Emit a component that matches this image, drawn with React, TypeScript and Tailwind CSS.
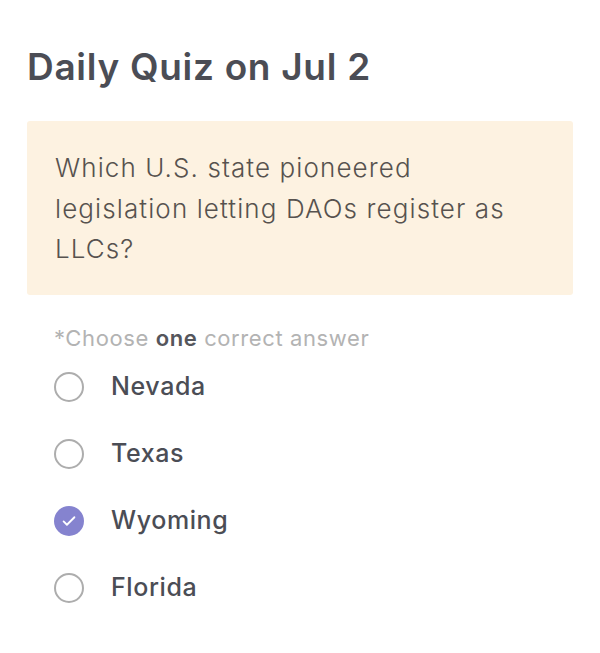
const options = [
  { label: "Nevada", checked: false },
  { label: "Texas", checked: false },
  { label: "Wyoming", checked: true },
  { label: "Florida", checked: false },
]

function Radio({ checked }: { checked: boolean }) {
  if (checked) {
    return (
      <span className="flex h-[30px] w-[30px] shrink-0 items-center justify-center rounded-full bg-[#8583cf]">
        <svg width="20" height="20" viewBox="0 0 24 24" fill="none" stroke="white" strokeWidth="2.2" strokeLinecap="round" strokeLinejoin="round">
          <path d="M5.5 12.5l4 4L18.5 7.5" />
        </svg>
      </span>
    )
  }
  return <span className="h-[30px] w-[30px] shrink-0 rounded-full border-2 border-[#adadad]" />
}

export default function App() {
  return (
    <div className="min-h-[653px] w-[600px] bg-white px-[27px] pt-[41px] font-['Inter',sans-serif]">
      <h1 className="text-[37px] font-semibold leading-[52px] tracking-[0.7px] text-[#4b4d55]">
        Daily Quiz on Jul 2
      </h1>

      <div className="mt-[28px] rounded-[3px] bg-[#fdf2e1] px-[28px] pb-[25px] pt-[27px]">
        <p className="w-[480px] text-[26px] font-light leading-[40.5px] tracking-[1.1px] text-[#57524f]">
          Which U.S. state pioneered legislation letting DAOs register as LLCs?
        </p>
      </div>

      <div className="mt-[29px] pl-[27px]">
        <p className="text-[22px] leading-[28px] tracking-[0.6px] text-[#b3b3b3]">
          *Choose <span className="font-semibold text-[#55565c]">one</span> correct answer
        </p>
        <ul className="mt-[2px] flex flex-col">
          {options.map((opt) => (
            <li key={opt.label} className="flex h-[67px] items-center gap-[27px]">
              <Radio checked={opt.checked} />
              <span className="text-[25px] font-medium tracking-[0.6px] text-[#4b4d55]">{opt.label}</span>
            </li>
          ))}
        </ul>
      </div>
    </div>
  )
}
